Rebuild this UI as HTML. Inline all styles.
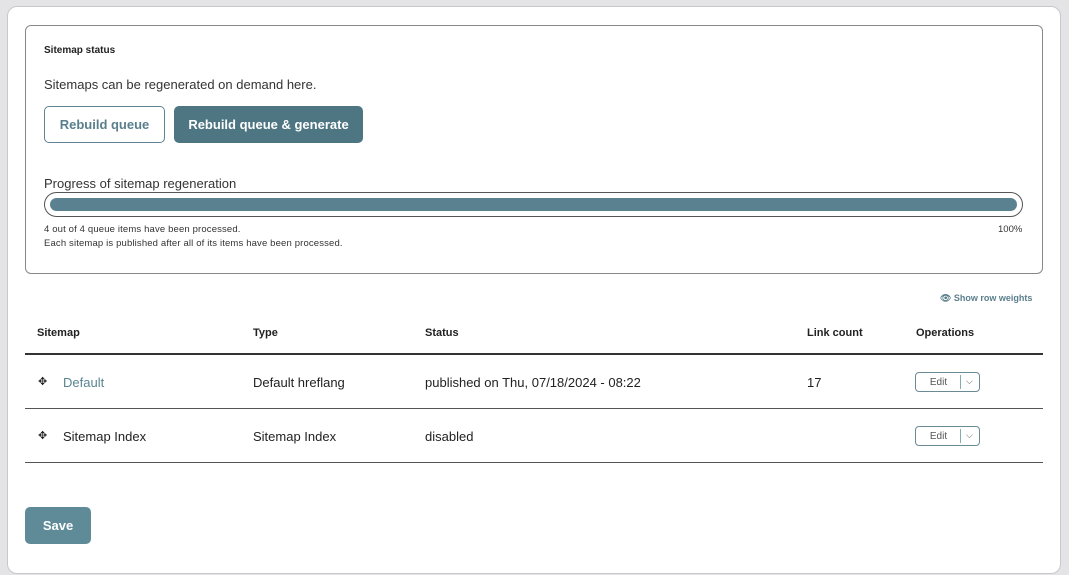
<!DOCTYPE html>
<html><head><style>
*{box-sizing:border-box;margin:0;padding:0}
body{width:1069px;height:575px;background:#e4e4e6;font-family:"Liberation Sans",sans-serif;color:#222;position:relative;overflow:hidden}
.card{position:absolute;left:7px;top:6px;width:1054px;height:568px;background:#fff;border:1px solid #c8c8cc;border-radius:10px}
.box{position:absolute;left:25px;top:25px;width:1018px;height:249px;border:1px solid #888;border-radius:6px}
.abs{position:absolute;white-space:nowrap}
.btn{position:absolute;border-radius:5px;font-weight:bold;font-size:13px;display:flex;align-items:center;justify-content:center}
.hr{position:absolute;left:25px;width:1018px;height:1px;background:#555}
.th{position:absolute;top:327px;font-size:11px;font-weight:bold}
.td{position:absolute;font-size:13px}
.edit{position:absolute;left:915px;width:65px;height:20px;border:1px solid #6a8a96;border-radius:4px;font-size:10px;color:#555}
.edit span{position:absolute;left:0;width:45px;top:4px;text-align:center}
.edit i{position:absolute;left:44px;top:2px;width:1px;height:14px;background:#8aa}
.edit b{position:absolute;left:50px;top:3px;font-weight:normal;font-size:9px}
.mv{position:absolute;left:38px;font-size:11px}
</style></head><body>
<div class="card"></div>
<div class="box"></div>
<div class="abs" style="left:44px;top:45px;font-size:10px;font-weight:bold">Sitemap status</div>
<div class="abs" style="left:44px;top:77px;font-size:13px;color:#333">Sitemaps can be regenerated on demand here.</div>
<div class="btn" style="left:44px;top:106px;width:121px;height:37px;border:1px solid #5f8390;color:#5a7f8c">Rebuild queue</div>
<div class="btn" style="left:174px;top:106px;width:189px;height:37px;background:#4d7582;color:#fff">Rebuild queue &amp; generate</div>
<div class="abs" style="left:44px;top:176px;font-size:13px;color:#333">Progress of sitemap regeneration</div>
<div class="abs" style="left:44px;top:192px;width:979px;height:25px;border:1px solid #555;border-radius:13px"></div>
<div class="abs" style="left:50px;top:198px;width:967px;height:13px;background:#5a8190;border-radius:7px"></div>
<div class="abs" style="left:44px;top:224px;font-size:9.5px;color:#333;letter-spacing:0.15px">4 out of 4 queue items have been processed.</div>
<div class="abs" style="left:998px;top:224px;font-size:9.5px;color:#333">100%</div>
<div class="abs" style="left:44px;top:238px;font-size:9.5px;color:#333;letter-spacing:0.15px">Each sitemap is published after all of its items have been processed.</div>
<div class="abs" style="left:940px;top:293px;font-size:9px;font-weight:bold;color:#5a7f8c">👁︎ Show row weights</div>
<div class="th" style="left:37px">Sitemap</div>
<div class="th" style="left:253px">Type</div>
<div class="th" style="left:425px">Status</div>
<div class="th" style="left:807px">Link count</div>
<div class="th" style="left:916px">Operations</div>
<div class="hr" style="top:353px;height:2px;background:#333"></div>
<div class="mv" style="top:375px">✥</div>
<div class="td" style="left:63px;top:375px;color:#5a8591">Default</div>
<div class="td" style="left:253px;top:375px">Default hreflang</div>
<div class="td" style="left:425px;top:375px">published on Thu, 07/18/2024 - 08:22</div>
<div class="td" style="left:807px;top:375px">17</div>
<div class="edit" style="top:372px"><span>Edit</span><i></i><b>⌵</b></div>
<div class="hr" style="top:408px"></div>
<div class="mv" style="top:429px">✥</div>
<div class="td" style="left:63px;top:429px">Sitemap Index</div>
<div class="td" style="left:253px;top:429px">Sitemap Index</div>
<div class="td" style="left:425px;top:429px">disabled</div>
<div class="edit" style="top:426px"><span>Edit</span><i></i><b>⌵</b></div>
<div class="hr" style="top:462px"></div>
<div class="btn" style="left:25px;top:507px;width:66px;height:37px;background:#5f8b99;color:#fff">Save</div>
</body></html>
